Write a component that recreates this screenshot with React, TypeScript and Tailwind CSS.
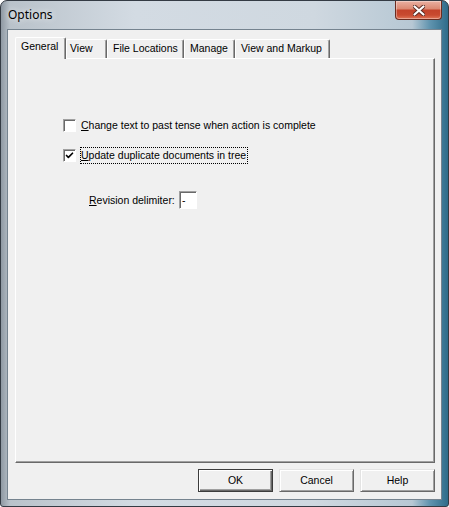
import { Check } from "lucide-react";

const tabs = [
  { label: "View", w: "w-[41px]", pl: "pl-[3px]" },
  { label: "File Locations", w: "w-[77px]", pl: "pl-[5px]" },
  { label: "Manage", w: "w-[51px]", pl: "pl-[5px]" },
  { label: "View and Markup", w: "w-[95px]", pl: "pl-[5px]" },
];

function CloseButton() {
  return (
    <div className="flex h-[19px] w-[47px] items-center justify-center rounded-b-[4px] border border-t-0 border-[#6b2c20] bg-[linear-gradient(180deg,#eab0a2_0%,#dc8a74_42%,#c4432b_52%,#c84a30_78%,#e07658_100%)] shadow-[inset_0_0_0_1px_rgba(255,255,255,0.35)]">
      <svg width="12" height="11" viewBox="0 0 12 11">
        <path
          d="M1.5 1.5 L10.5 9.5 M10.5 1.5 L1.5 9.5"
          stroke="#5a2a22"
          strokeWidth="4"
          strokeLinecap="round"
        />
        <path
          d="M1.5 1.5 L10.5 9.5 M10.5 1.5 L1.5 9.5"
          stroke="#ffffff"
          strokeWidth="2.2"
          strokeLinecap="round"
        />
      </svg>
    </div>
  );
}

function CheckBox({ checked }: { checked?: boolean }) {
  return (
    <div className="flex h-[13px] w-[13px] shrink-0 items-center justify-center border border-t-[#a0a0a0] border-l-[#a0a0a0] border-r-white border-b-white bg-white shadow-[inset_1px_1px_0_#696969]">
      {checked && <Check className="h-[9px] w-[9px] text-black" strokeWidth={4.5} />}
    </div>
  );
}

function DlgButton({ label, isDefault }: { label: string; isDefault?: boolean }) {
  return (
    <div
      className={
        isDefault
          ? "flex h-[23px] w-[75px] items-center justify-center border border-[#3c3c3c] bg-[#f0f0f0] shadow-[inset_1px_1px_0_#ffffff,inset_-1px_-1px_0_#696969,inset_-2px_-2px_0_#a0a0a0]"
          : "flex h-[23px] w-[75px] items-center justify-center border border-t-[#e3e3e3] border-l-[#e3e3e3] border-r-[#696969] border-b-[#696969] bg-[#f0f0f0] shadow-[inset_1px_1px_0_#ffffff,inset_-1px_-1px_0_#a0a0a0]"
      }
    >
      {label}
    </div>
  );
}

export default function App() {
  return (
    <div className="flex h-[507px] w-[449px] flex-col rounded-t-[7px] rounded-b-[3px] border border-[#343b44] bg-[linear-gradient(90deg,#8f99a3_0%,#b9c2ca_2%,#d3dbe3_30%,#cfd8e0_70%,#b7c8d4_92%,#5f93ae_96%,#2f6c8a_100%)] font-['Liberation_Sans',Arial,sans-serif] text-[10.5px] leading-[13px] text-black">
      {/* Title bar */}
      <div className="flex h-[28px] items-start justify-between pl-[7px] pr-[6px]">
        <span className="pt-[6px] font-['Noto_Sans',sans-serif] text-[12px] leading-[16px] [text-shadow:0_0_6px_#ffffff]">
          Options
        </span>
        <CloseButton />
      </div>

      {/* Client area */}
      <div className="mx-[6px] mb-[6px] flex flex-1 flex-col border border-[#75838f] bg-[#f0f0f0] pt-[7px] pl-[7px] pr-[6px]">
        {/* Tabs */}
        <div className="flex h-[21px] items-end">
          <div className="relative z-10 -mb-px h-[22px] w-[51px] rounded-t-[2px] border-t border-r border-l border-t-white border-l-white border-r-[#696969] bg-[#f0f0f0] pt-[2px] pl-[5px] shadow-[inset_-1px_0_0_#a0a0a0]">
            General
          </div>
          {tabs.map((t) => (
            <div
              key={t.label}
              className={`h-[19px] ${t.w} ${t.pl} rounded-t-[2px] border-t border-r border-l border-t-white border-l-white border-r-[#696969] pt-[2px] shadow-[inset_-1px_0_0_#a0a0a0] whitespace-nowrap`}
            >
              {t.label}
            </div>
          ))}
        </div>

        {/* Tab panel */}
        <div className="flex flex-1 flex-col border border-t-white border-l-white border-r-[#696969] border-b-[#696969] pt-[58px] shadow-[inset_-1px_-1px_0_#a0a0a0]">
          <div className="flex h-[17px] items-center gap-[5px] pl-[47px]">
            <CheckBox />
            <span>
              <u>C</u>hange text to past tense when action is complete
            </span>
          </div>
          <div className="mt-[12px] flex h-[18px] items-center gap-[4px] pl-[47px]">
            <CheckBox checked />
            <span className="border border-dotted border-black pr-px leading-[15px]">
              <u>U</u>pdate duplicate documents in tree
            </span>
          </div>
          <div className="mt-[27px] flex items-center pl-[73px]">
            <span className="w-[90px]">
              <u>R</u>evision delimiter:
            </span>
            <div className="flex h-[18px] w-[18px] items-center border border-t-[#a0a0a0] border-l-[#a0a0a0] border-r-white border-b-white bg-white pl-[2px] shadow-[inset_1px_1px_0_#696969]">
              -
            </div>
          </div>
        </div>

        {/* Buttons */}
        <div className="mt-[6px] mb-[7px] flex justify-end gap-[6px]">
          <DlgButton label="OK" isDefault />
          <DlgButton label="Cancel" />
          <DlgButton label="Help" />
        </div>
      </div>
    </div>
  );
}
